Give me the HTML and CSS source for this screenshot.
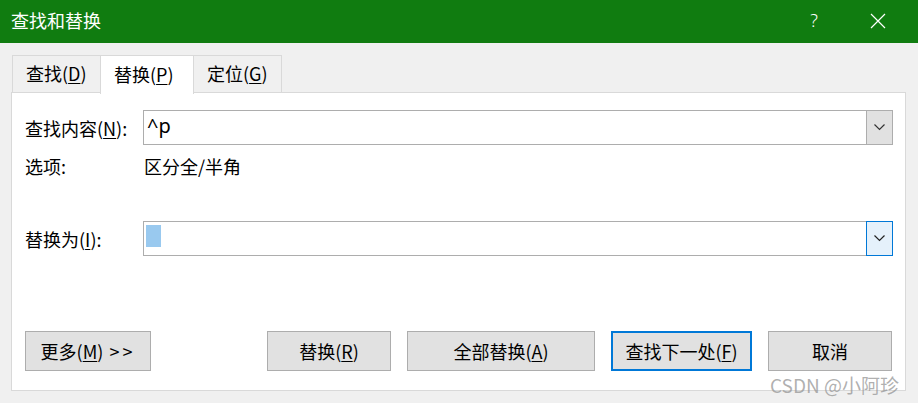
FILE: index.html
```html
<!DOCTYPE html>
<html lang="zh-CN">
<head>
    <meta charset="UTF-8">
    <title>查找和替换</title>
    <link rel="stylesheet" href="styles.css">
</head>
<body>
    <div class="dialog">
        <div class="titlebar">
            <span class="title">查找和替换</span>
            <span class="help">?</span>
            <span class="close">
                <svg width="16" height="16" viewBox="0 0 16 16"><path d="M1 1 L15 15 M15 1 L1 15" stroke="#fff" stroke-width="1.2" fill="none"/></svg>
            </span>
        </div>

        <div class="tabs">
            <div class="tab">查找(<u>D</u>)</div>
            <div class="tab active">替换(<u>P</u>)</div>
            <div class="tab">定位(<u>G</u>)</div>
        </div>

        <div class="panel">
            <div class="row row-find">
                <div class="label">查找内容(<u>N</u>):</div>
                <div class="combo">
                    <span class="combo-text">^p</span>
                    <span class="combo-btn">
                        <svg width="11" height="7" viewBox="0 0 11 7"><path d="M0.5 0.5 L5.5 5.5 L10.5 0.5" stroke="#333" stroke-width="1.2" fill="none"/></svg>
                    </span>
                </div>
            </div>
            <div class="row row-opts">
                <div class="label">选项:</div>
                <div class="opts">区分全/半角</div>
            </div>
            <div class="row row-repl">
                <div class="label">替换为(<u>I</u>):</div>
                <div class="combo">
                    <span class="caret-sel"></span>
                    <span class="combo-btn focus">
                        <svg width="11" height="7" viewBox="0 0 11 7"><path d="M0.5 0.5 L5.5 5.5 L10.5 0.5" stroke="#222" stroke-width="1.2" fill="none"/></svg>
                    </span>
                </div>
            </div>
            <div class="buttons">
                <button class="btn btn-more">更多(<u>M</u>) <span class="arrows">&gt;&gt;</span></button>
                <div class="spacer"></div>
                <button class="btn btn-repl">替换(<u>R</u>)</button>
                <button class="btn btn-all">全部替换(<u>A</u>)</button>
                <button class="btn btn-next default">查找下一处(<u>F</u>)</button>
                <button class="btn btn-cancel">取消</button>
            </div>
        </div>

        <div class="watermark">CSDN @小阿珍</div>
    </div>
</body>
</html>
```

FILE: styles.css
```css
* { box-sizing: border-box; }
body { margin: 0; background: #f0f0f0; font-family: "Noto Sans CJK SC", "Noto Sans", sans-serif; color: #000; }
.dialog { position: relative; width: 918px; height: 403px; background: #f0f0f0; overflow: hidden; }
u { text-decoration: underline; text-underline-offset: 2px; text-decoration-thickness: 1px; }

.titlebar { height: 43px; background: #107c10; color: #fff; display: flex; align-items: center; padding-left: 11px; }
.title { font-size: 18px; flex: 1; margin-top: -3px; }
.help { font-size: 18px; width: 70px; text-align: center; margin-top: -4px; margin-right: -6px; font-family: "Noto Sans", sans-serif; font-weight: 300; }
.close { width: 70px; display: flex; justify-content: center; margin-top: -2px; margin-right: 5px; }

.tabs { display: flex; align-items: flex-end; padding-left: 12px; margin-top: 12px; height: 39px; position: relative; z-index: 1; }
.tab { height: 37px; margin-bottom: 2px; padding: 0 13px; border: 1px solid #d9d9d9; border-bottom: none; background: #f0f0f0; font-size: 18px; line-height: 34px; margin-right: -1px; white-space: nowrap; }
.tab:first-child { width: 89px; }
.tab.active { height: 39px; margin-bottom: 0; background: #fff; width: 94px; padding: 0 13px; line-height: 36px; }
.tab:last-child { width: 89px; }

.panel { margin: -2px 12px 0 11px; height: 299px; background: #fff; border: 1px solid #d9d9d9; padding: 17px 12px 0 13px; }

.row { display: flex; align-items: center; font-size: 18px; }
.label { width: 118px; white-space: nowrap; }
.combo { width: 750px; height: 35px; border: 1px solid #adadad; display: flex; align-items: stretch; }
.combo-text { flex: 1; padding-left: 3px; font-size: 20px; line-height: 29px; font-family: "Noto Sans", sans-serif; }
.combo-btn { width: 27px; background: #e1e1e1; border: 1px solid #adadad; margin: -1px -1px -1px auto; display: flex; align-items: center; justify-content: center; }
.combo-btn.focus { background: #e5f1fb; border-color: #0078d7; }
.caret-sel { width: 15px; margin: 3px 0 8px 2px; background: #99c9ef; }

.row-opts { height: 24px; margin-top: 9px; }
.row-repl { margin-top: 43px; }
.opts { padding-left: 1px; }

.buttons { display: flex; margin-top: 75px; }
.spacer { flex: 1; }
.btn { height: 40px; background: #e1e1e1; border: 1px solid #adadad; font-family: inherit; font-size: 18px; color: #000; padding: 0; margin-left: 16px; white-space: nowrap; }
.btn-more { width: 126px; margin-left: 0; }
.arrows { letter-spacing: 3px; margin-left: 2px; }
.btn-repl { width: 124px; }
.btn-all { width: 188px; }
.btn-next { width: 141px; }
.btn-cancel { width: 124px; margin-right: 1px; }
.btn.default { border: 2px solid #0078d7; }

.watermark { position: absolute; left: 770px; top: 371px; font-size: 19px; color: rgba(150, 150, 150, 0.75); font-family: "Noto Sans CJK SC", sans-serif; }
```
